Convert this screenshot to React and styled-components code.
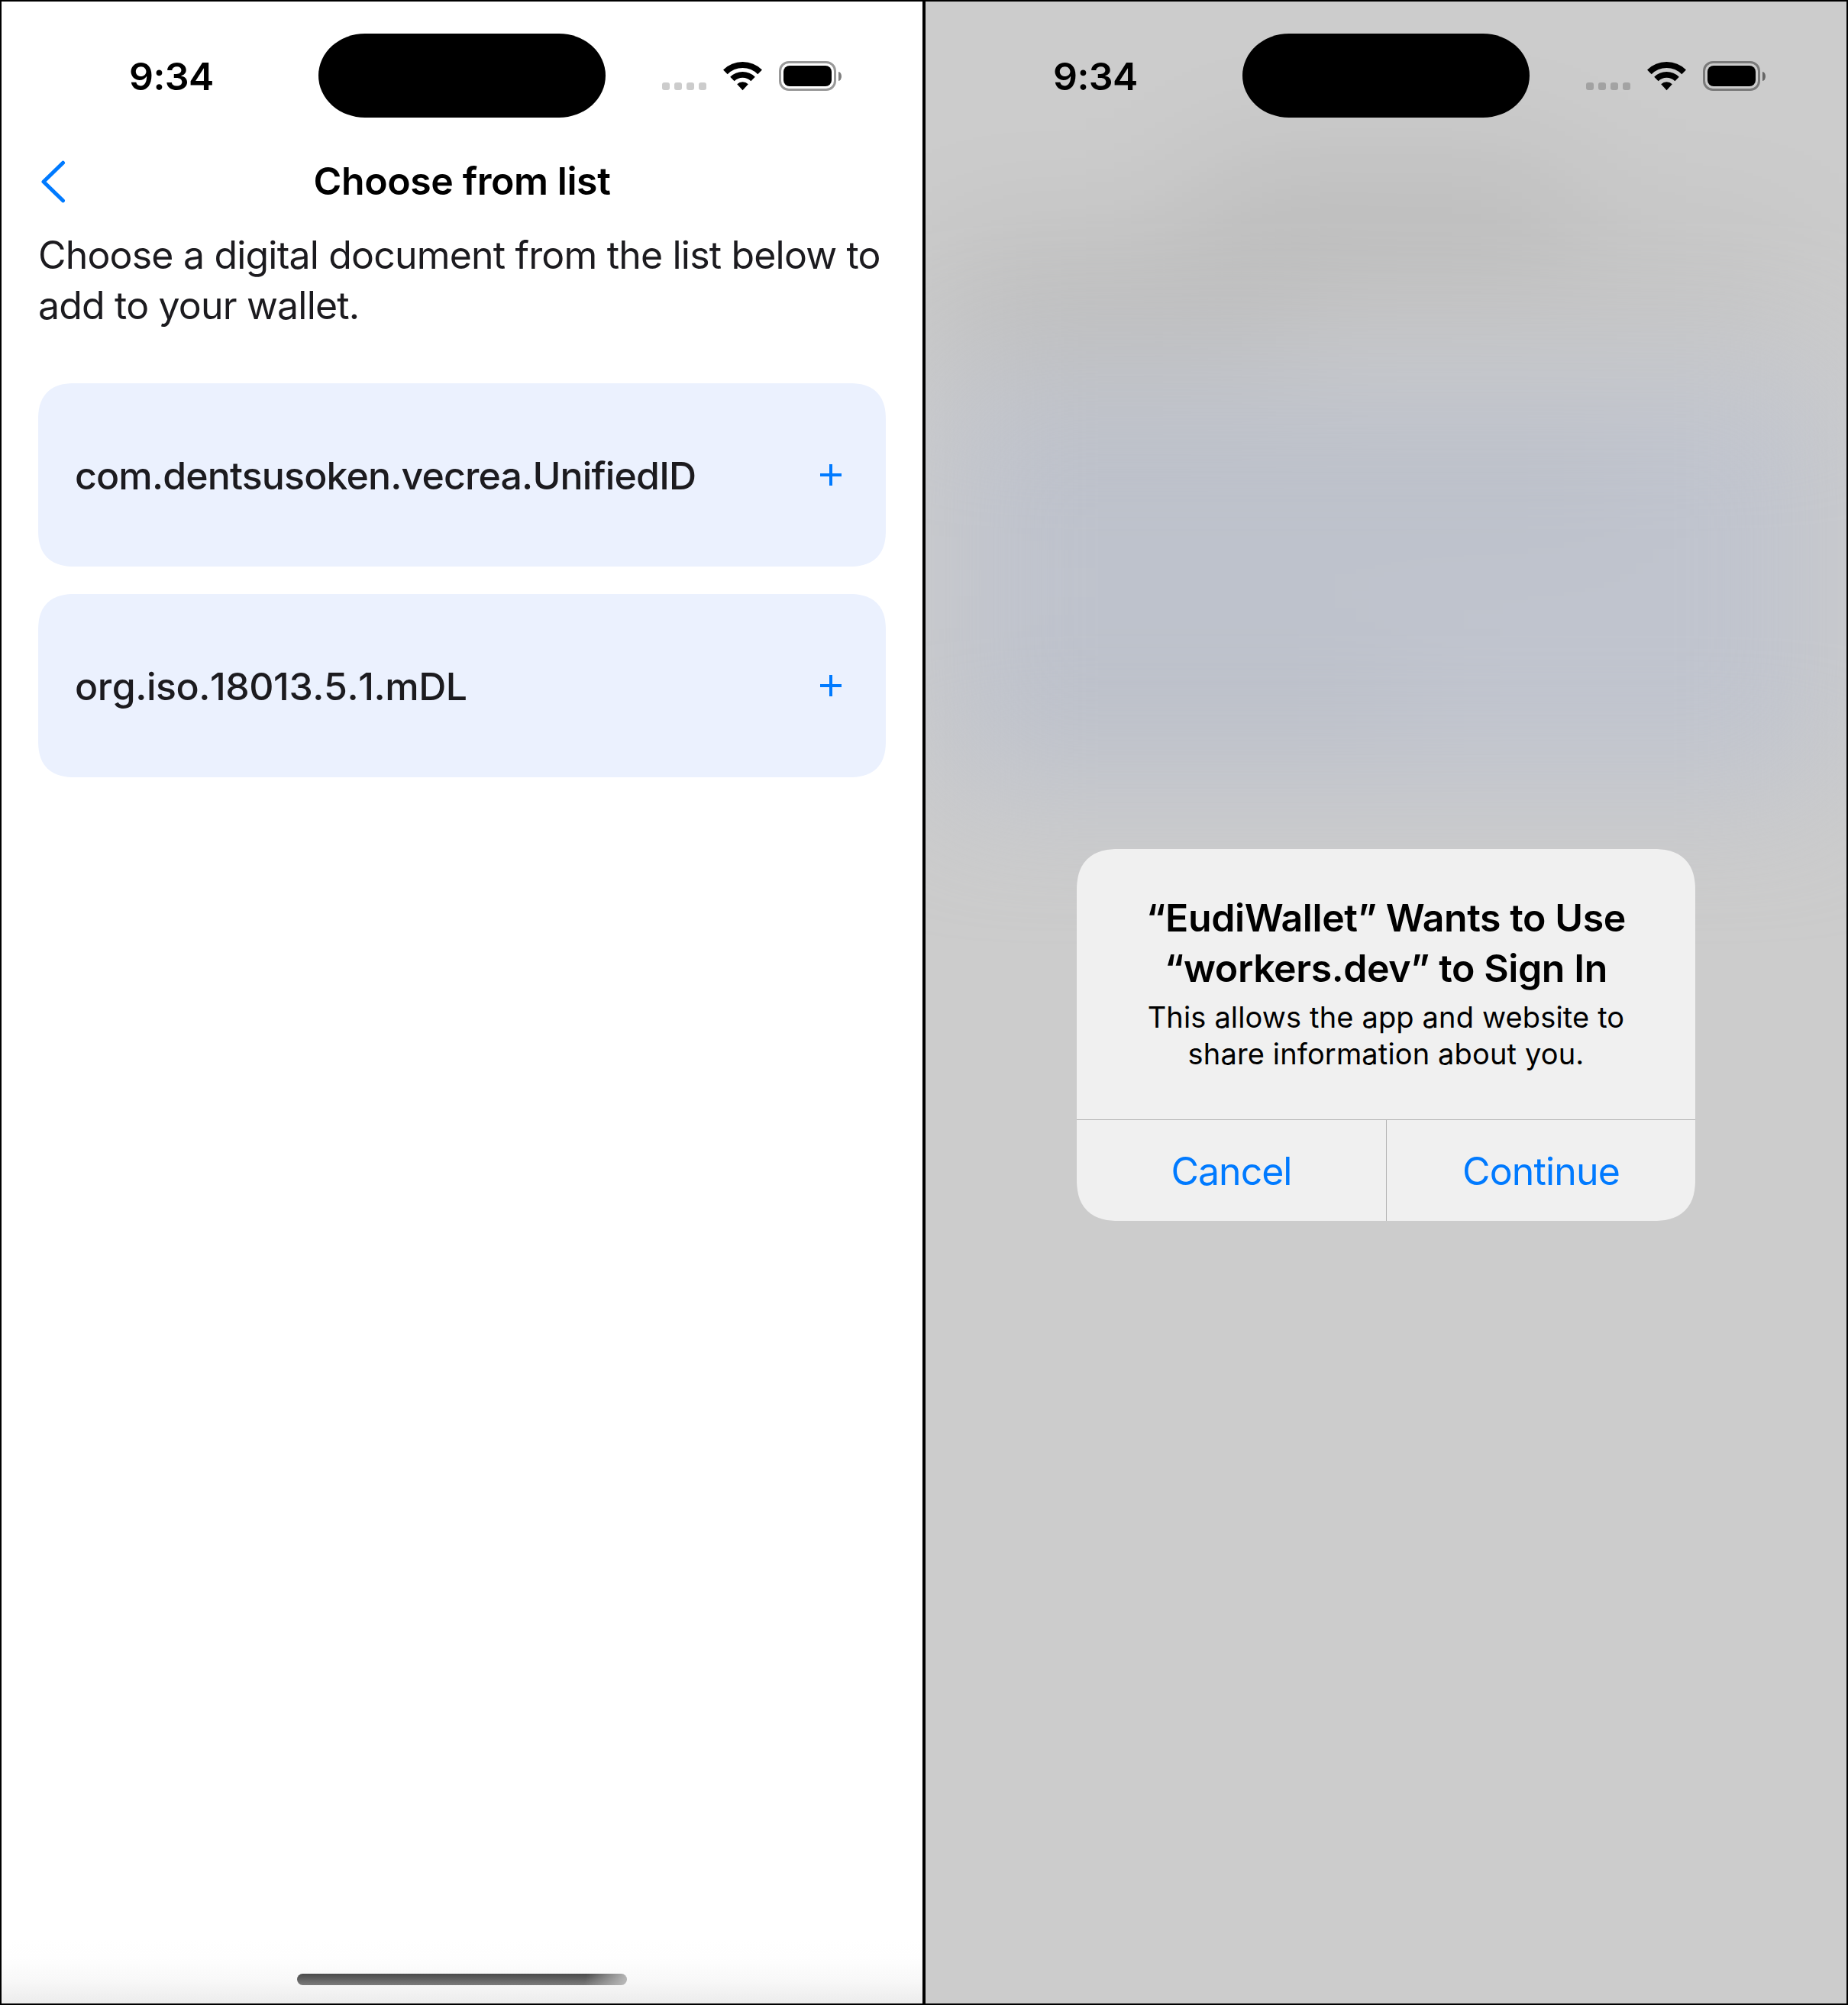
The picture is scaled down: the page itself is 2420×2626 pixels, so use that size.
import React from "react";
import styled, { createGlobalStyle, css } from "styled-components";

const GlobalStyle = createGlobalStyle`
  *, *::before, *::after { box-sizing: border-box; }
  html, body { margin: 0; padding: 0; background: #000; }
  body {
    font-family: Inter, "Liberation Sans", sans-serif;
    font-kerning: normal;
    -webkit-font-smoothing: antialiased;
  }
  button { font: inherit; border: 0; padding: 0; margin: 0; background: none; }
`;

const continuousCorner = (radius, reach) => css`
  border-radius: ${radius};
  @supports (corner-shape: superellipse(1.3)) {
    border-radius: ${reach};
    corner-shape: superellipse(1.3);
  }
`;

const Board = styled.div`
  display: flex;
  width: 2420px;
  height: 2626px;
`;

const Phone = styled.section`
  position: relative;
  display: flex;
  flex-direction: column;
  width: 1210px;
  height: 2626px;
  overflow: hidden;
  border: 2px solid #000;
  background: ${(p) => (p.$dimmed ? "#cccccc" : "#ffffff")};
`;

const StatusBar = styled.header`
  position: relative;
  display: grid;
  grid-template-columns: 415px 376px 415px;
  align-items: center;
  flex: none;
  height: 194px;
`;

const Time = styled.div`
  padding: 2px 0 0 167px;
  font-size: 50px;
  font-weight: 600;
  line-height: 66px;
  letter-spacing: -0.6px;
  color: #000;
`;

const Island = styled.div`
  height: 110px;
  border-radius: 61px / 55px;
  background: #000;
`;

const StatusIcons = styled.div`
  display: flex;
  align-items: flex-end;
  height: 39px;
  padding-left: 74px;
`;

const Dots = styled.div`
  display: flex;
  gap: 6px;
  margin: 0 22px 1px 0;
`;

const Dot = styled.span`
  width: 10px;
  height: 10px;
  border-radius: 3px;
  background: rgba(0, 0, 0, 0.2);
`;

const WifiSvg = styled.svg`
  display: block;
  width: 51px;
  height: 39px;
  margin-right: 22px;
`;

const Battery = styled.div`
  width: 75px;
  height: 39px;
  padding: 3px;
  border: 3px solid rgba(0, 0, 0, 0.4);
  border-radius: 13px;
`;

const BatteryLevel = styled.div`
  height: 100%;
  border-radius: 8px;
  background: #000;
`;

const BatteryTip = styled.div`
  width: 4px;
  height: 12px;
  margin: 0 0 13px 3px;
  border-radius: 0 4px 4px 0 / 0 6px 6px 0;
  background: rgba(0, 0, 0, 0.5);
`;

const NavBar = styled.nav`
  display: grid;
  grid-template-columns: 200px 1fr 200px;
  align-items: center;
  flex: none;
  height: 82px;
`;

const BackButton = styled.button`
  display: flex;
  padding: 2px 0 0 50px;
`;

const Title = styled.h1`
  margin: 0;
  text-align: center;
  font-size: 50px;
  font-weight: 600;
  line-height: 66px;
  letter-spacing: -0.42px;
  color: #000;
`;

const Intro = styled.p`
  flex: none;
  margin: 0;
  padding: 23px 0 0 48px;
  font-size: 50px;
  line-height: 66px;
  letter-spacing: -0.82px;
  white-space: nowrap;
  color: #1c1b1f;
`;

const CardList = styled.div`
  display: flex;
  flex-direction: column;
  gap: 36px;
  padding: 69px 48px 0;
`;

const Card = styled.div`
  display: flex;
  align-items: center;
  justify-content: space-between;
  height: 240px;
  padding: 0 58px 0 48px;
  ${continuousCorner("40px", "48px")}
  background: #ebf1fe;
`;

const CardLabel = styled.span`
  padding-top: 2px;
  font-size: 50px;
  font-weight: 500;
  line-height: 66px;
  letter-spacing: ${(p) => p.$track};
  font-kerning: ${(p) => p.$kerning};
  white-space: nowrap;
  color: #1c1b1f;
`;

const PlusSvg = styled.svg`
  display: block;
  width: 28px;
  height: 28px;
`;

const BottomShade = styled.div`
  display: flex;
  justify-content: center;
  align-items: flex-start;
  height: 84px;
  margin-top: auto;
  padding-top: 45px;
  background: linear-gradient(to bottom, #ffffff 0%, #fefefe 30%, #f8f8f8 65%, #ececec 100%);
`;

const HomeIndicator = styled.div`
  width: 432px;
  height: 15px;
  border-radius: 8px;
  background:
    linear-gradient(105deg, rgba(190, 190, 190, 0) 87%, rgba(190, 190, 190, 0.9) 99%),
    linear-gradient(to bottom, #4a4a4a, #7b7b7b);
`;

const Backdrop = styled.div`
  position: absolute;
  inset: 0;
  overflow: hidden;
`;

const BackdropPage = styled.div`
  display: flex;
  flex-direction: column;
  align-items: flex-start;
  padding: 215px 24px 0;
  filter: blur(84px);
`;

const HazeTitle = styled.div`
  align-self: center;
  width: 480px;
  height: 106px;
  background: rgba(0, 0, 0, 0.08);
`;

const HazeLine = styled.div`
  width: ${(p) => p.$width};
  height: 66px;
  background: rgba(0, 0, 0, 0.08);
`;

const HazeCard = styled.div`
  display: flex;
  align-items: center;
  align-self: stretch;
  height: 272px;
  margin-top: ${(p) => p.$gap};
  padding-left: 76px;
  background: #c0c4ce;
`;

const HazeLabel = styled.div`
  width: ${(p) => p.$width};
  height: 60px;
  background: rgba(0, 0, 0, 0.05);
`;

const AlertLayer = styled.div`
  position: absolute;
  inset: 0;
  display: flex;
  justify-content: center;
  align-items: flex-start;
  padding-top: 1110px;
`;

const Alert = styled.div`
  display: flex;
  flex-direction: column;
  width: 810px;
  height: 487px;
  overflow: hidden;
  ${continuousCorner("45px", "55px")}
  background: #f0f0f0;
`;

const AlertBody = styled.div`
  height: 354px;
  padding-top: 57px;
  text-align: center;
  white-space: nowrap;
  color: #000;
`;

const AlertTitle = styled.h2`
  margin: 0;
  font-size: 50px;
  font-weight: 600;
  line-height: 66px;
  letter-spacing: -0.4px;
`;

const AlertText = styled.p`
  margin: 7px 0 0;
  font-size: 38px;
  line-height: 48px;
  letter-spacing: 0.15px;
`;

const AlertActions = styled.div`
  display: grid;
  grid-template-columns: 405px 1fr;
  height: 133px;
  border-top: 1px solid #b4b4b4;
`;

const AlertButton = styled.button`
  padding-top: 2px;
  font-size: 50px;
  line-height: 66px;
  letter-spacing: -1px;
  color: #007aff;
  & + & {
    border-left: 1px solid #b4b4b4;
    letter-spacing: -0.85px;
  }
`;

function Wifi() {
  return (
    <WifiSvg viewBox="0 0 51 39" fill="none">
      <path d="M2.87 14.37a32 32 0 0 1 45.26 0" stroke="#000" strokeWidth="8" />
      <path d="M11.92 23.42a19.2 19.2 0 0 1 27.16 0" stroke="#000" strokeWidth="7.7" />
      <path d="M18.2 30.2a10.4 10.4 0 0 1 14.6 0L25.5 38.2Z" fill="#000" />
    </WifiSvg>
  );
}

function Status() {
  return (
    <StatusBar>
      <Time>9:34</Time>
      <Island />
      <StatusIcons>
        <Dots>
          <Dot />
          <Dot />
          <Dot />
          <Dot />
        </Dots>
        <Wifi />
        <Battery>
          <BatteryLevel />
        </Battery>
        <BatteryTip />
      </StatusIcons>
    </StatusBar>
  );
}

function Plus() {
  return (
    <PlusSvg viewBox="0 0 28 28" shapeRendering="crispEdges">
      <path d="M12 0h4v12h12v4H16v12h-4V16H0v-4h12Z" fill="#007aff" />
    </PlusSvg>
  );
}

const documents = [
  { name: "com.dentsusoken.vecrea.UnifiedID", track: "-0.85px", kerning: "normal" },
  { name: "org.iso.18013.5.1.mDL", track: "-0.45px", kerning: "none" },
];

export default function App() {
  return (
    <Board>
      <GlobalStyle />
      <Phone>
        <Status />
        <NavBar>
          <BackButton aria-label="Back">
            <svg width="36" height="58" viewBox="0 0 36 58" fill="none">
              <path
                d="M30.5 4.2 5 29l25.5 24.8"
                stroke="#007aff"
                strokeWidth="5"
                strokeLinecap="round"
                strokeLinejoin="round"
              />
            </svg>
          </BackButton>
          <Title>Choose from list</Title>
        </NavBar>
        <Intro>
          Choose a digital document from the list below to
          <br />
          add to your wallet.
        </Intro>
        <CardList>
          {documents.map((d) => (
            <Card key={d.name}>
              <CardLabel $track={d.track} $kerning={d.kerning}>
                {d.name}
              </CardLabel>
              <Plus />
            </Card>
          ))}
        </CardList>
        <BottomShade>
          <HomeIndicator />
        </BottomShade>
      </Phone>

      <Phone $dimmed>
        <Backdrop>
          <BackdropPage>
            <HazeTitle />
            <HazeLine $width="1110px" />
            <HazeLine $width="440px" />
            <HazeCard $gap="36px">
              <HazeLabel $width="820px" />
            </HazeCard>
            <HazeCard $gap="0px">
              <HazeLabel $width="520px" />
            </HazeCard>
          </BackdropPage>
        </Backdrop>
        <Status />
        <AlertLayer>
          <Alert role="alertdialog">
            <AlertBody>
              <AlertTitle>
                “EudiWallet” Wants to Use
                <br />
                “workers.dev” to Sign In
              </AlertTitle>
              <AlertText>
                This allows the app and website to
                <br />
                share information about you.
              </AlertText>
            </AlertBody>
            <AlertActions>
              <AlertButton>Cancel</AlertButton>
              <AlertButton>Continue</AlertButton>
            </AlertActions>
          </Alert>
        </AlertLayer>
      </Phone>
    </Board>
  );
}
